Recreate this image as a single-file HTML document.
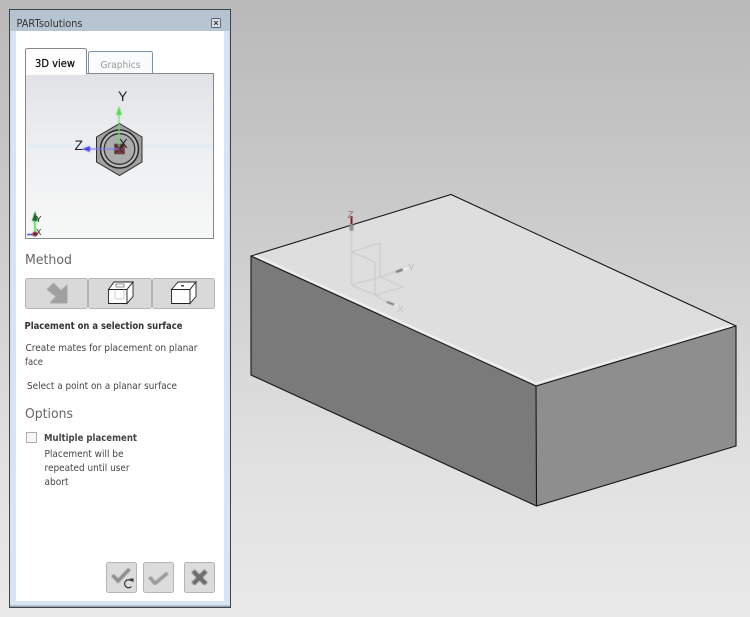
<!DOCTYPE html>
<html><head><meta charset="utf-8"><title>PARTsolutions</title>
<style>html,body{margin:0;padding:0;background:#ddd}svg{display:block}text{font-family:"DejaVu Sans","Liberation Sans",sans-serif}text.l{font-family:"Liberation Sans",sans-serif}</style></head>
<body>
<svg xmlns="http://www.w3.org/2000/svg" width="750" height="617" viewBox="0 0 750 617">
<defs>
<linearGradient id="bg" x1="0" y1="0" x2="0" y2="1">
<stop offset="0" stop-color="#b9b9b9"/><stop offset=".35" stop-color="#cbcbcb"/><stop offset=".75" stop-color="#e1e1e1"/><stop offset="1" stop-color="#e9e9e9"/></linearGradient>
<linearGradient id="title" x1="0" y1="0" x2="0" y2="1"><stop offset="0" stop-color="#b6c4d2"/><stop offset="1" stop-color="#d8e6f3"/></linearGradient>
<linearGradient id="view" x1="0" y1="0" x2="0" y2="1"><stop offset="0" stop-color="#e0e2e6"/><stop offset=".4" stop-color="#eceef0"/><stop offset="1" stop-color="#f8f8f8"/></linearGradient>
<filter id="s" x="-5%" y="-5%" width="110%" height="110%"><feGaussianBlur stdDeviation=".4"/></filter>
<filter id="t" x="-5%" y="-20%" width="110%" height="140%"><feGaussianBlur stdDeviation=".28"/></filter>
</defs>
<rect width="750" height="617" fill="url(#bg)"/>

<!-- block -->
<path d="M451 194.500L736 326 536 386 251 256Z" fill="#dedede"/>
<path d="M251 256L536 386 536.500 506 251 375Z" fill="#7a7a7a"/>
<path d="M536 386L736 326 736 446 536.500 506Z" fill="#8e8e8e"/>
<path d="M253 254.500L536 383.500 734 324.500" fill="none" stroke="#f6f6f6" stroke-width="1.500" filter="url(#s)"/>
<path d="M451 194.500L736 326 736 446 536.500 506 251 375 251 256ZM251 256L536 386 736 326M536 386L536.500 506" fill="none" stroke="#161616" stroke-width="1.100"/>
<!-- triad -->
<g filter="url(#s)" fill="none" stroke="#c4c4c4" stroke-width=".9">
<path d="M351.500 232V285M351.500 252L380 243V277M351.500 252L375 262V295M351.500 285L375 295 403 287 380 277 351.500 285M375 295L387 302M380 277L395 272"/>
</g>
<g filter="url(#s)">
<rect x="349.500" y="224" width="4" height="7" rx="1.500" fill="#8f8f8f"/>
<path d="M396 272L403 269.500" stroke="#777" stroke-width="2.500"/><path d="M403 270L408 268" stroke="#fff" stroke-width="1"/>
<path d="M387 302L395 305" stroke="#777" stroke-width="2"/><path d="M394 304.500L399 306.500" stroke="#fff" stroke-width="1"/>
</g>
<path d="M351.500 216V224" stroke="#7a2020" stroke-width="2"/>
<text class="l" x="347.500" y="218" font-size="10" fill="#a07070">Z</text>
<text class="l" x="408" y="271" font-size="10" fill="#bdbdbd">Y</text>
<text class="l" x="397" y="312" font-size="10" fill="#c4c4c4">X</text>

<!-- panel -->
<rect x="9.500" y="9.500" width="221" height="598" fill="url(#title)" stroke="#3e444c"/>
<rect x="10.500" y="31" width="219" height="576" fill="#d6e5f3"/>
<rect x="16" y="31" width="208" height="570" fill="#fff"/>
<rect x="10" y="605.500" width="220" height="1.500" fill="#9aa3ab"/>
<rect x="211.500" y="18.500" width="9" height="9" rx="1" fill="#dbe3ea" stroke="#5a6570"/>
<path d="M214 21L218 25M218 21L214 25" stroke="#333" stroke-width="1"/>

<!-- tabs -->
<path d="M88.500 73.500V53.500Q88.500 51.500 90.500 51.500H151Q152.500 51.500 152.500 53.500V73.500" fill="#fafbfc" stroke="#7c95ad"/>
<rect x="25.500" y="73.500" width="188" height="165" fill="url(#view)" stroke="#85898d"/>
<path d="M25.500 74V50.500Q25.500 48.500 27.500 48.500H84Q86.500 48.500 86.500 50.500V74" fill="#fff" stroke="#85898d"/>
<rect x="26" y="72" width="60" height="3" fill="#fff"/>

<!-- 3d view content -->
<rect x="27" y="144" width="185" height="4" fill="#e6ecf3"/>
<rect x="40" y="218" width="170" height="18" fill="#f6f7f7"/>
<path d="M119.500 123.500L142 137V162L119.500 175.500 96.500 162V137Z" fill="#a0a0a0" stroke="#2e2e2e" stroke-width="1"/>
<circle cx="119.500" cy="149" r="19" fill="#b8b8b8" stroke="#262626" stroke-width="1.500"/>
<circle cx="119.500" cy="149" r="15.300" fill="#acacac" stroke="#303030" stroke-width="1.300"/>
<rect x="114.500" y="144" width="10" height="10" fill="#7b3a40" stroke="#555" stroke-width=".6"/>
<path d="M115 145L124 153M124 145L115 153" stroke="#3a2024" stroke-width=".8"/>
<g filter="url(#s)">
<path d="M119 113V147" stroke="#66e066" stroke-width="1.200"/>
<path d="M119 106L122 115H116Z" fill="#4fdc4f"/>
<path d="M119.500 149H90" stroke="#7b7bf0" stroke-width="1.200"/>
<path d="M82 149L90 146V152Z" fill="#4040ee"/>
<path d="M35 217V233" stroke="#2ee02e" stroke-width="1.500"/>
<path d="M35 211L38 221H32Z" fill="#0f6b1a"/>
<path d="M27 234.500H35" stroke="#1818e0" stroke-width="1.200"/>
<circle cx="35" cy="234" r="2.500" fill="#8a1a22"/>
</g>
<text class="l" x="118" y="101" font-size="14" fill="#222">Y</text>
<text class="l" x="74.500" y="150" font-size="14" fill="#222">Z</text>
<text class="l" x="119" y="148" font-size="13" fill="#222">X</text>
<text class="l" x="36" y="222" font-size="8" fill="#111">Y</text>
<text class="l" x="36" y="235" font-size="8" fill="#111">X</text>

<!-- method -->
<g fill="#d9d9d9" stroke="#b5b5b5">
<rect x="25.500" y="278.500" width="62" height="30" rx="2"/>
<rect x="88.500" y="278.500" width="63" height="30" rx="2"/>
<rect x="152.500" y="278.500" width="62" height="30" rx="2"/>
</g>
<path d="M47 289.500L53.500 283 61 290.500 67 285V303H50L56 296.500Z" fill="#a0a0a0" stroke="#8a8a8a" stroke-width=".5" filter="url(#s)"/>
<g fill="#fff" stroke="#222" stroke-width=".9">
<path d="M108.500 289.500H127V303.500H108.500Z"/><path d="M108.500 289.500L114 282H133L127 289.500Z"/><path d="M127 289.500L133 282V296.500L127 303.500Z"/>
</g>
<rect x="116" y="284" width="8" height="3" fill="none" stroke="#666" stroke-width=".7"/>
<path d="M115 289.500V297Q115 299 117 299H122Q124 299 124 297V289.500" fill="none" stroke="#bbb" stroke-width=".8"/>
<g fill="#fff" stroke="#222" stroke-width=".9">
<path d="M171.500 289.500H190V303.500H171.500Z"/><path d="M171.500 289.500L178 282H196L190 289.500Z"/><path d="M190 289.500L196 282V296.500L190 303.500Z"/>
</g>
<rect x="181" y="285" width="3" height="1.500" fill="#444"/>

<!-- bottom buttons -->
<g fill="#dcdcdc" stroke="#b5b5b5">
<rect x="106.500" y="562.500" width="30" height="30" rx="2"/>
<rect x="143.500" y="562.500" width="30" height="30" rx="2"/>
<rect x="184.500" y="562.500" width="30" height="30" rx="2"/>
</g>
<g filter="url(#s)">
<path d="M112.500 575L118 581 129.500 569" fill="none" stroke="#8c8c8c" stroke-width="3.500"/>
<path d="M149.500 577L155 583.500 167.500 573" fill="none" stroke="#9a9a9a" stroke-width="3.500"/>
<path d="M193 571L206 584M206 571L193 584" stroke="#6e6e6e" stroke-width="4.500"/>
</g>
<path d="M131.500 581A4 4 0 1 0 131.500 586.500" fill="none" stroke="#333" stroke-width="1.200"/>
<path d="M129.500 578.500H133.500V582.500Z" fill="#333"/>

<!-- text -->
<g filter="url(#t)">
<text x="16.500" y="27" font-size="10.500" fill="#333" textLength="66" lengthAdjust="spacingAndGlyphs">PARTsolutions</text>
<text x="100.500" y="68" font-size="10" fill="#999" textLength="40" lengthAdjust="spacingAndGlyphs">Graphics</text>
<text x="35" y="67" font-size="10.500" fill="#111" stroke="#111" stroke-width=".25" textLength="40" lengthAdjust="spacingAndGlyphs">3D view</text>
<text x="25" y="264" font-size="13" fill="#666" textLength="47" lengthAdjust="spacingAndGlyphs">Method</text>
<text x="24.500" y="329" font-size="10" font-weight="bold" fill="#333" textLength="158" lengthAdjust="spacingAndGlyphs">Placement on a selection surface</text>
<text x="25.500" y="351" font-size="10" fill="#444" textLength="172" lengthAdjust="spacingAndGlyphs">Create mates for placement on planar</text>
<text x="25" y="365" font-size="10" fill="#444" textLength="18" lengthAdjust="spacingAndGlyphs">face</text>
<text x="27" y="389" font-size="10" fill="#444" textLength="150" lengthAdjust="spacingAndGlyphs">Select a point on a planar surface</text>
<text x="25" y="418" font-size="13" fill="#666" textLength="48" lengthAdjust="spacingAndGlyphs">Options</text>
<text x="44" y="441" font-size="10" font-weight="bold" fill="#444" textLength="93" lengthAdjust="spacingAndGlyphs">Multiple placement</text>
<text x="44.500" y="457" font-size="10" fill="#444" textLength="79" lengthAdjust="spacingAndGlyphs">Placement will be</text>
<text x="44.500" y="471" font-size="10" fill="#444" textLength="85" lengthAdjust="spacingAndGlyphs">repeated until user</text>
<text x="44.500" y="485" font-size="10" fill="#444" textLength="24" lengthAdjust="spacingAndGlyphs">abort</text>
</g>
<rect x="26.500" y="432.500" width="10" height="10" fill="#f7f7f7" stroke="#b0b0b0"/>
</svg>
</body></html>
